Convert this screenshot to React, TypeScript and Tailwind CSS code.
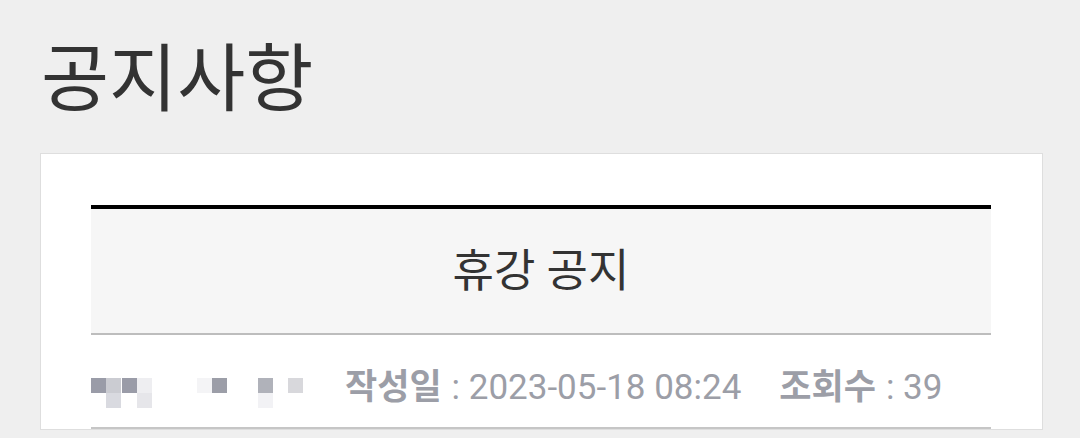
import * as React from "react";

const font = "font-['Roboto','Noto_Sans_CJK_KR',sans-serif]";

// pixel mosaic that hides the author's name
const mosaic: { x: number; y: number; c: string }[] = [
  { x: 0, y: 0, c: "bg-[#9a9ca8]" },
  { x: 15, y: 0, c: "bg-[#cbccd2]" },
  { x: 15, y: 15, c: "bg-[#d9dae0]" },
  { x: 31, y: 0, c: "bg-[#9a9ca8]" },
  { x: 46, y: 0, c: "bg-[#eeeef1]" },
  { x: 46, y: 15, c: "bg-[#e6e6ea]" },
  { x: 106, y: 0, c: "bg-[#f4f4f6]" },
  { x: 121, y: 0, c: "bg-[#9c9ea8]" },
  { x: 167, y: 0, c: "bg-[#b0b2ba]" },
  { x: 167, y: 15, c: "bg-[#f2f2f5]" },
  { x: 197, y: 0, c: "bg-[#d8d8dc]" },
];

function Mosaic() {
  return (
    <div className="relative mt-[12px] h-[30px] w-[254px] shrink-0">
      {mosaic.map((m, i) => (
        <span
          key={i}
          className={`absolute h-[15px] w-[15px] ${m.c}`}
          style={{ left: m.x, top: m.y }}
        />
      ))}
    </div>
  );
}

export default function App() {
  return (
    <div className={`h-[438px] w-[1080px] overflow-hidden bg-[#efefef] pl-[40px] ${font}`}>
      <h1 className="pt-[36px] pb-[29px] pl-[1px] text-[74px] leading-[88px] font-normal text-[#333333]">
        공지사항
      </h1>
      <div className="w-[1003px] border border-[#dedede] bg-white px-[50px] pt-[51px]">
        <div className="w-[900px]">
          <div className="h-[4px] bg-black" />
          <div className="flex h-[126px] items-center justify-center border-b-2 border-[#bdbdbd] bg-[#f6f6f6]">
            <span className="text-[45px] leading-none text-[#333333]">휴강 공지</span>
          </div>
          <div className="flex h-[94px] items-center border-b-2 border-[#c6c6c6] pt-[12px]">
            <Mosaic />
            <div className="flex items-center text-[35px] leading-none text-[#9c9ea7]">
              <span className="font-bold">작성일</span>
              <span className="ml-[10px]">: 2023-05-18 08:24</span>
              <span className="ml-[38px] font-bold">조회수</span>
              <span className="ml-[10px]">: 39</span>
            </div>
          </div>
        </div>
      </div>
    </div>
  );
}
